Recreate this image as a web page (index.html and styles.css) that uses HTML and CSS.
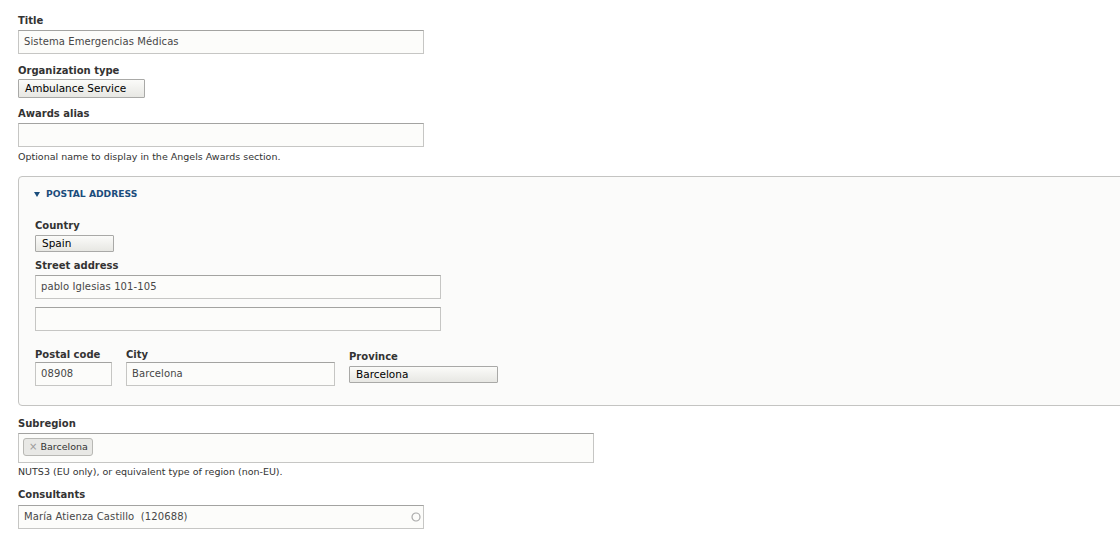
FILE: index.html
```html
<!DOCTYPE html>
<html lang="en">
<head>
<meta charset="utf-8">
<title>Organization</title>
<link rel="stylesheet" href="styles.css">
</head>
<body>
<form class="form">
  <div class="item item-title">
    <div class="label">Title</div>
    <div class="text-input w406">Sistema Emergencias Médicas</div>
  </div>

  <div class="item item-org">
    <div class="label label-tight">Organization type</div>
    <div class="select select-lg">Ambulance Service</div>
  </div>

  <div class="item item-alias">
    <div class="label">Awards alias</div>
    <div class="text-input w406"></div>
    <div class="description">Optional name to display in the Angels Awards section.</div>
  </div>

  <div class="fieldset">
    <div class="legend">
      <svg class="caret" width="6" height="5" viewBox="0 0 6 5"><path d="M0 0H6L3 5Z" fill="#1b4d7c"/></svg>
      <span>POSTAL ADDRESS</span>
    </div>

    <div class="item item-country">
      <div class="label">Country</div>
      <div class="select select-sm w79">Spain</div>
    </div>

    <div class="item item-street">
      <div class="label">Street address</div>
      <div class="text-input w406">pablo Iglesias 101-105</div>
      <div class="text-input w406 second"></div>
    </div>

    <div class="row">
      <div class="col">
        <div class="label label-none">Postal code</div>
        <div class="text-input w77">08908</div>
      </div>
      <div class="col">
        <div class="label label-none">City</div>
        <div class="text-input w209">Barcelona</div>
      </div>
      <div class="col col-province">
        <div class="label">Province</div>
        <div class="select select-sm w149">Barcelona</div>
      </div>
    </div>
  </div>

  <div class="item item-subregion">
    <div class="label">Subregion</div>
    <div class="tags-input">
      <span class="tag"><span class="tag-x">×</span>Barcelona</span>
    </div>
    <div class="description desc-tight">NUTS3 (EU only), or equivalent type of region (non-EU).</div>
  </div>

  <div class="item item-consultants">
    <div class="label label-wide">Consultants</div>
    <div class="text-input w406 autocomplete">
      <span>María Atienza Castillo &nbsp;(120688)</span>
      <svg class="throbber" width="10" height="10" viewBox="0 0 10 10"><circle cx="5" cy="5" r="4" fill="none" stroke="#a9a9a9" stroke-width="1.2"/></svg>
    </div>
  </div>
</form>
</body>
</html>
```

FILE: styles.css
```css
html, body {
  margin: 0;
  padding: 0;
  background: #ffffff;
}

body {
  overflow: hidden;
  font-family: "DejaVu Sans", Verdana, sans-serif;
  color: #333333;
}

.form {
  padding: 13px 0 0 18px;
}

.label {
  font-size: 10px;
  font-weight: bold;
  line-height: 15px;
  color: #333333;
  margin-bottom: 2px;
  white-space: nowrap;
}

.label-tight { margin-bottom: 1px; }
.label-none { margin-bottom: 0; }
.label-wide { margin-bottom: 3px; }

.text-input {
  box-sizing: border-box;
  height: 24px;
  border: 1px solid #c6c6c4;
  border-top-color: #a3a3a1;
  background: #fcfcfa;
  padding: 0 5px;
  font-size: 10px;
  letter-spacing: 0.1px;
  line-height: 22px;
  color: #474747;
  white-space: nowrap;
  overflow: hidden;
}

.w406 { width: 406px; }
.w77 { width: 77px; }
.w209 { width: 209px; }
.w79 { width: 79px; }
.w149 { width: 149px; }

.select {
  box-sizing: border-box;
  border: 1px solid #a9a9a7;
  border-radius: 1px;
  background: linear-gradient(#fbfbf9, #e7e7e3);
  padding: 0 6px;
  font-size: 10.5px;
  color: #000000;
  white-space: nowrap;
}

.select-lg {
  width: 127px;
  height: 19px;
  line-height: 17px;
}

.select-sm {
  height: 17px;
  line-height: 15px;
}

.description {
  font-size: 9.5px;
  line-height: 13px;
  color: #333333;
  margin-top: 3px;
}

.desc-tight { margin-top: 2px; }

.item-org { margin-top: 9px; }
.item-alias { margin-top: 8px; }

.fieldset {
  margin: 13px -40px 0 0;
  border: 1px solid #c4c4c2;
  border-radius: 4px;
  background: #fbfbfa;
  padding: 10px 16px 19px 16px;
}

.legend {
  display: flex;
  align-items: center;
  gap: 6px;
  height: 13px;
  font-size: 9.2px;
  font-weight: bold;
  line-height: 13px;
  color: #1b4d7c;
  margin-left: -1px;
}

.caret {
  display: block;
  margin-top: 1px;
}

.item-country { margin-top: 18px; }
.item-street { margin-top: 6px; }
.second { margin-top: 8px; }

.row {
  display: flex;
  gap: 14px;
  margin-top: 16px;
}

.col-province {
  padding-top: 2px;
}

.item-subregion { margin-top: 10px; }

.tags-input {
  box-sizing: border-box;
  width: 576px;
  height: 30px;
  border: 1px solid #c6c6c4;
  border-top-color: #a3a3a1;
  background: #fcfcfa;
  padding: 4px;
  display: flex;
  align-items: flex-start;
}

.tag {
  box-sizing: border-box;
  height: 18px;
  display: inline-flex;
  align-items: center;
  border: 1px solid #b8b8b4;
  border-radius: 3px;
  background: #e8e8e5;
  padding: 0 4px 0 5px;
  font-size: 9.5px;
  line-height: 16px;
  color: #333333;
}

.tag-x {
  color: #9a9a9a;
  font-size: 10px;
  margin-right: 3px;
}

.item-consultants { margin-top: 9px; }

.autocomplete {
  display: flex;
  align-items: center;
  justify-content: space-between;
  padding-right: 2px;
}

.throbber {
  display: block;
  flex: none;
}
```
